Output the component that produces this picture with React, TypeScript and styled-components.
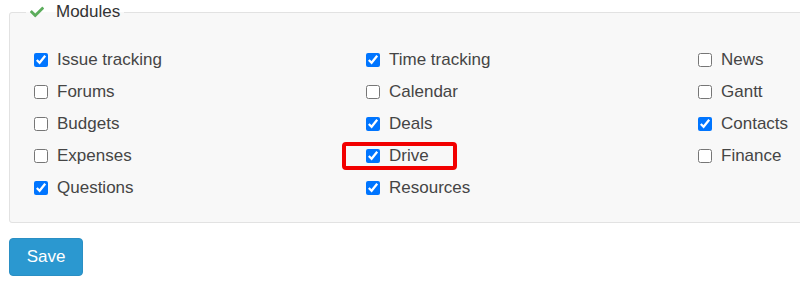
import styled, { createGlobalStyle } from "styled-components";
import { FaCheck } from "react-icons/fa";

const GlobalStyle = createGlobalStyle`
  body {
    margin: 0;
    background: #fff;
    font-family: "Liberation Sans", Arial, sans-serif;
    overflow: hidden;
  }
`;

const Page = styled.form`
  padding: 0 0 0 9px;
  width: 820px;
`;

const Box = styled.fieldset`
  margin: 0;
  padding: 20px 0 18px 24px;
  border: 1px solid #e2e2e2;
  border-radius: 3px;
  background: #f8f8f8;
  width: 800px;
  box-sizing: border-box;
`;

const Legend = styled.legend`
  display: flex;
  align-items: center;
  gap: 12px;
  margin-left: -8px;
  padding: 0 4px;
  height: 24px;
  font-size: 17px;
  color: #333;

  svg {
    color: #5cad5c;
    width: 14px;
    height: 14px;
  }
`;

const Grid = styled.div`
  display: grid;
  grid-template-columns: repeat(3, 332px);
  grid-template-rows: repeat(5, 32px);
  grid-auto-flow: column;
`;

const Item = styled.label<{ $highlight?: boolean }>`
  position: relative;
  display: flex;
  align-items: center;
  gap: 9px;
  font-size: 17px;
  color: #454545;

  input {
    margin: 0;
    width: 14px;
    height: 14px;
  }

  ${({ $highlight }) =>
    $highlight &&
    `
    &::after {
      content: "";
      position: absolute;
      left: -24px;
      top: 2px;
      width: 115px;
      height: 28px;
      box-sizing: border-box;
      border: 4px solid #f20000;
      border-radius: 4px;
      pointer-events: none;
    }
  `}
`;

const SaveButton = styled.button`
  margin-top: 15px;
  width: 74px;
  height: 38px;
  border: 1px solid #2a8fc4;
  border-radius: 4px;
  background: #2b98d0;
  color: #fff;
  font-family: "Liberation Sans", Arial, sans-serif;
  font-size: 17px;
`;

const modules: { name: string; on: boolean; highlight?: boolean }[] = [
  { name: "Issue tracking", on: true },
  { name: "Forums", on: false },
  { name: "Budgets", on: false },
  { name: "Expenses", on: false },
  { name: "Questions", on: true },
  { name: "Time tracking", on: true },
  { name: "Calendar", on: false },
  { name: "Deals", on: true },
  { name: "Drive", on: true, highlight: true },
  { name: "Resources", on: true },
  { name: "News", on: false },
  { name: "Gantt", on: false },
  { name: "Contacts", on: true },
  { name: "Finance", on: false },
];

export default function App() {
  return (
    <>
      <GlobalStyle />
      <Page onSubmit={(e) => e.preventDefault()}>
        <Box>
          <Legend>
            <FaCheck />
            Modules
          </Legend>
          <Grid>
            {modules.map((m) => (
              <Item key={m.name} $highlight={m.highlight}>
                <input type="checkbox" defaultChecked={m.on} />
                {m.name}
              </Item>
            ))}
          </Grid>
        </Box>
        <SaveButton type="submit">Save</SaveButton>
      </Page>
    </>
  );
}
